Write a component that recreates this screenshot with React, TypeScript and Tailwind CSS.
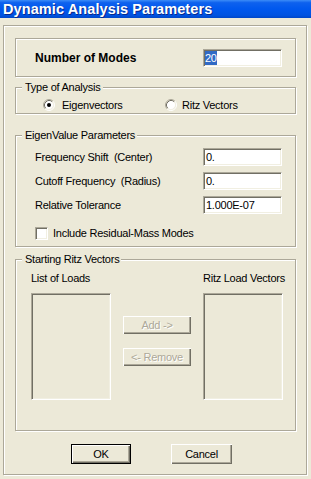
import React from 'react';

const Group = ({
  title,
  className,
  children,
}: {
  title?: string;
  className?: string;
  children?: React.ReactNode;
}) => (
  <div
    className={`relative ml-[11px] w-[281px] border border-[#ACA899] shadow-[inset_1px_1px_0_#fff,1px_1px_0_#fff] ${className ?? ''}`}
  >
    {title && (
      <span className="absolute left-[6px] -top-[8px] bg-[#ECE9D8] pl-[3px] pr-[2px] leading-[14px] whitespace-nowrap">
        {title}
      </span>
    )}
    {children}
  </div>
);

const Field = ({ value, selected }: { value: string; selected?: boolean }) => (
  <div className="ml-auto mr-[13px] flex h-[18px] w-[79px] items-center border border-t-[#ACA899] border-l-[#ACA899] border-r-white border-b-white bg-white pl-[1px] shadow-[inset_1px_1px_0_#716F64,inset_-1px_-1px_0_#F1EFE2]">
    {selected ? (
      <span className="bg-[#316AC5] leading-[14px] text-white">{value}</span>
    ) : (
      <span className="pl-[1px] leading-[14px]">{value}</span>
    )}
  </div>
);

const Radio = ({ checked }: { checked?: boolean }) => (
  <svg width="12" height="12" viewBox="0 0 12 12" className="shrink-0">
    <circle cx="6" cy="6" r="4.5" fill="#fff" />
    <path d="M2.11 9.89A5.5 5.5 0 0 1 9.89 2.11" fill="none" stroke="#ACA899" />
    <path d="M9.89 2.11A5.5 5.5 0 0 1 2.11 9.89" fill="none" stroke="#fff" />
    <path d="M2.82 9.18A4.5 4.5 0 0 1 9.18 2.82" fill="none" stroke="#716F64" />
    <path d="M9.18 2.82A4.5 4.5 0 0 1 2.82 9.18" fill="none" stroke="#F1EFE2" />
    {checked && <circle cx="6" cy="6" r="2" fill="#000" />}
  </svg>
);

const WinButton = ({
  label,
  disabled,
  isDefault,
  className,
}: {
  label: string;
  disabled?: boolean;
  isDefault?: boolean;
  className?: string;
}) => (
  <div
    className={`flex items-center justify-center bg-[#ECE9D8] ${
      isDefault
        ? 'border border-black shadow-[inset_1px_1px_0_#fff,inset_-1px_-1px_0_#716F64,inset_-2px_-2px_0_#ACA899]'
        : 'shadow-[inset_1px_1px_0_#fff,inset_-1px_-1px_0_#716F64,inset_-2px_-2px_0_#ACA899]'
    } ${className ?? ''}`}
  >
    <span
      className={
        disabled ? 'text-[#ACA899] [text-shadow:1px_1px_0_#fff]' : 'text-black'
      }
    >
      {label}
    </span>
  </div>
);

const ListBox = () => (
  <div className="h-[107px] w-[80px] border border-t-[#ACA899] border-l-[#ACA899] border-r-white border-b-white bg-[#ECE9D8] shadow-[inset_1px_1px_0_#716F64,inset_-1px_-1px_0_#F1EFE2]" />
);

export default function App() {
  return (
    <div className="h-[479px] w-[311px] overflow-hidden bg-[#ECE9D8] font-['Liberation_Sans',Arial,sans-serif] text-[11px] tracking-[-0.25px] text-black">
      {/* title bar */}
      <div className="flex h-[18px] items-center bg-[linear-gradient(180deg,#3C8CF7_0%,#0E61EE_15%,#0058EE_50%,#0053E1_85%,#0047C8_100%)] pl-[3px]">
        <span className="text-[14.5px] font-bold leading-none tracking-[0.1px] text-white [text-shadow:1px_1px_0_#0A2A8A]">
          Dynamic Analysis Parameters
        </span>
      </div>

      <div className="ml-[3px] mt-[7px] h-[450px] w-[304px] border border-[#ACA899] shadow-[inset_1px_1px_0_#fff,1px_1px_0_#fff]">
        {/* number of modes */}
        <Group className="mt-[12px] h-[39px]">
          <div className="flex h-full items-center pl-[19px]">
            <span className="text-[12px] font-bold tracking-normal">Number of Modes</span>
            <Field value="20" selected />
          </div>
        </Group>

        {/* type of analysis */}
        <Group title="Type of Analysis" className="mt-[10px] h-[27px]">
          <div className="mt-[10px] flex h-[14px] items-center pl-[27px]">
            <div className="flex w-[122px] items-center gap-[7px]">
              <Radio checked />
              <span>Eigenvectors</span>
            </div>
            <div className="flex items-center gap-[5px]">
              <Radio />
              <span>Ritz Vectors</span>
            </div>
          </div>
        </Group>

        {/* eigenvalue parameters */}
        <Group title="EigenValue Parameters" className="mt-[21px] h-[112px]">
          <div className="mt-[12px] flex items-center pl-[19px]">
            <span>Frequency Shift&nbsp; (Center)</span>
            <Field value="0." />
          </div>
          <div className="mt-[6px] flex items-center pl-[19px]">
            <span>Cutoff Frequency&nbsp; (Radius)</span>
            <Field value="0." />
          </div>
          <div className="mt-[6px] flex items-center pl-[19px]">
            <span>Relative Tolerance</span>
            <Field value="1.000E-07" />
          </div>
          <div className="mt-[11px] flex items-center gap-[5px] pl-[19px]">
            <div className="h-[13px] w-[13px] border border-t-[#ACA899] border-l-[#ACA899] border-r-white border-b-white bg-white shadow-[inset_1px_1px_0_#716F64,inset_-1px_-1px_0_#F1EFE2]" />
            <span>Include Residual-Mass Modes</span>
          </div>
        </Group>

        {/* starting ritz vectors */}
        <Group title="Starting Ritz Vectors" className="mt-[12px] h-[172px]">
          <div className="flex">
            <div className="ml-[15px] w-[80px] pt-[11px]">
              <div className="h-[14px] leading-[14px]">List of Loads</div>
              <div className="mt-[8px]">
                <ListBox />
              </div>
            </div>
            <div className="ml-[12px] w-[68px] pt-[56px]">
              <WinButton label="Add ->" disabled className="h-[18px] w-[68px]" />
              <WinButton label="<- Remove" disabled className="mt-[14px] h-[18px] w-[68px]" />
            </div>
            <div className="ml-[12px] w-[86px] pt-[11px]">
              <div className="h-[14px] whitespace-nowrap leading-[14px]">Ritz Load Vectors</div>
              <div className="mt-[8px]">
                <ListBox />
              </div>
            </div>
          </div>
        </Group>

        {/* buttons */}
        <div className="mt-[13px] flex gap-[40px] pl-[67px]">
          <WinButton label="OK" isDefault className="h-[20px] w-[60px]" />
          <WinButton label="Cancel" className="h-[20px] w-[61px]" />
        </div>
      </div>
    </div>
  );
}
